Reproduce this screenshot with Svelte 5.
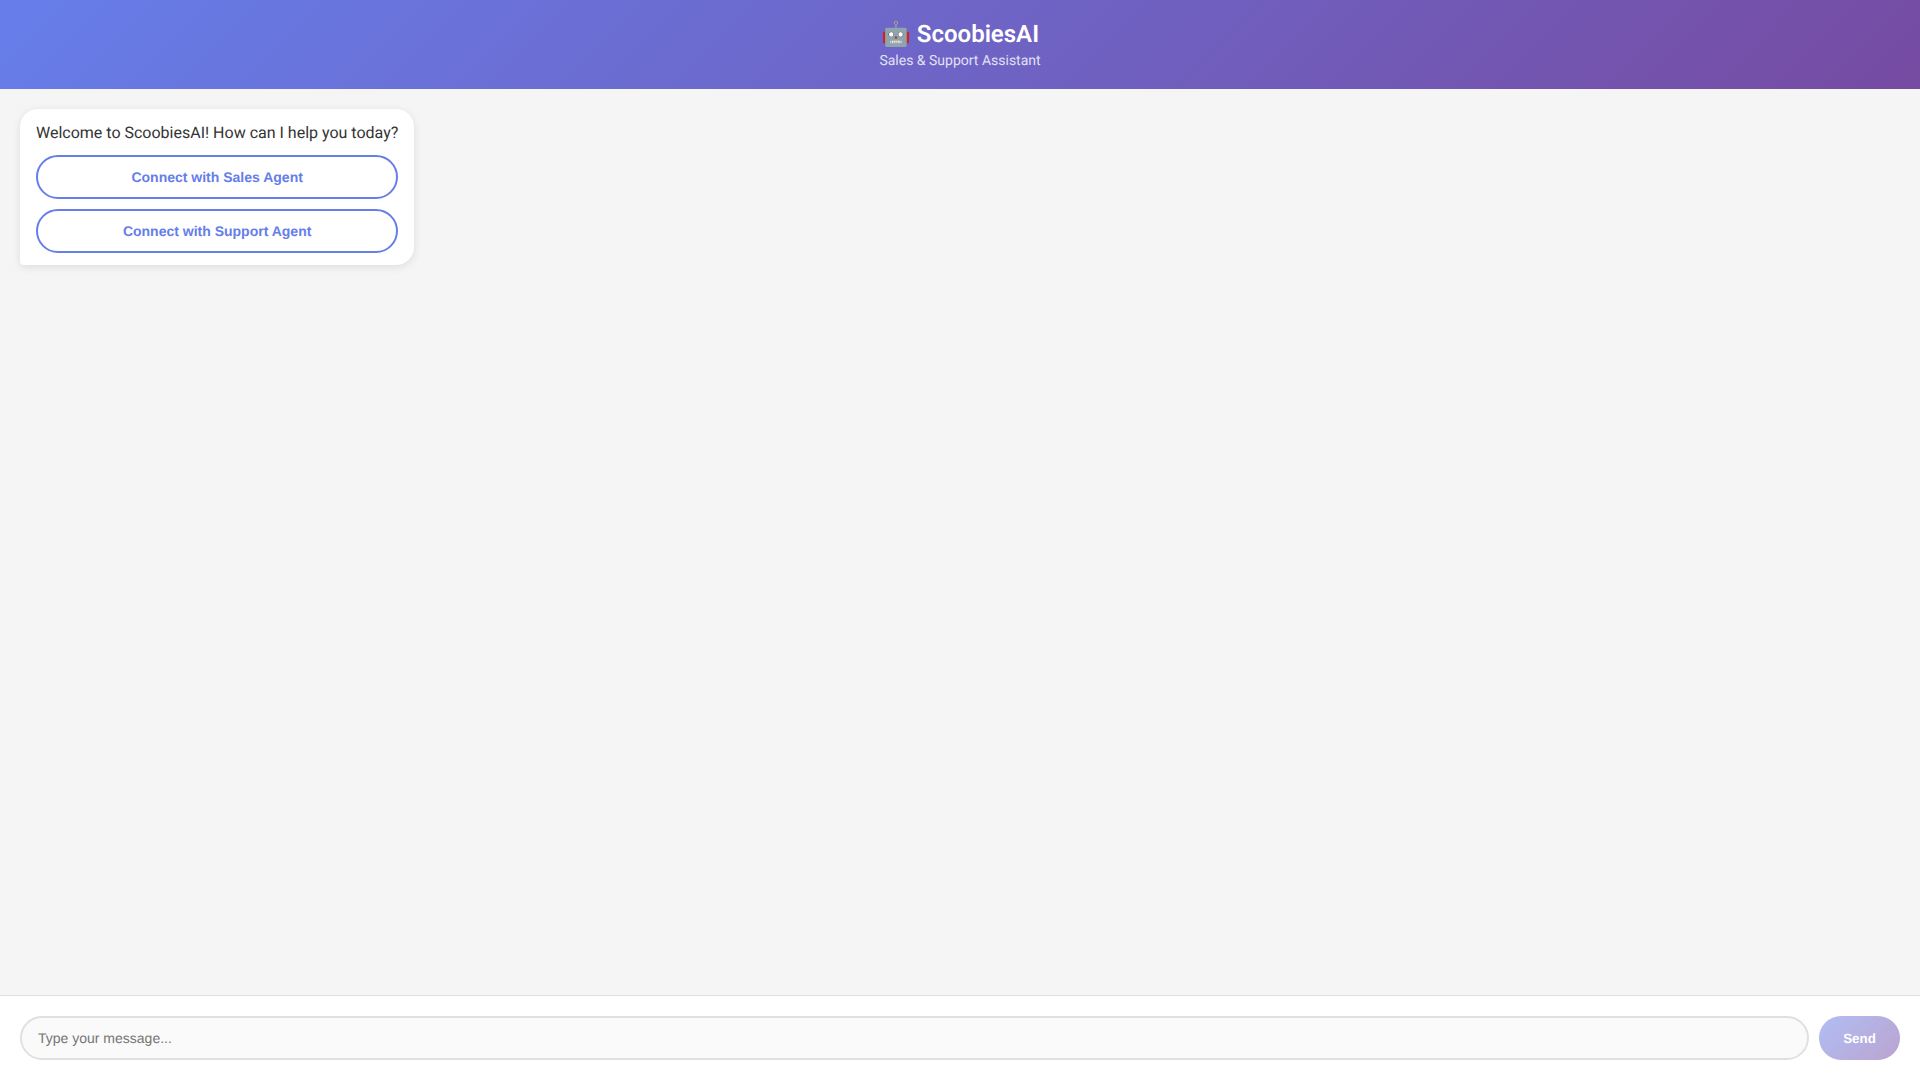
<script>
  let message = $state('');
  const actions = ['Connect with Sales Agent', 'Connect with Support Agent'];
</script>

<div class="app">
  <header class="header">
    <h1>🤖 ScoobiesAI</h1>
    <p>Sales &amp; Support Assistant</p>
  </header>
  <main class="messages">
    <div class="bubble">
      <div class="text">Welcome to ScoobiesAI! How can I help you today?</div>
      <div class="actions">
        {#each actions as a}
          <button class="action">{a}</button>
        {/each}
      </div>
    </div>
  </main>
  <footer class="composer">
    <input bind:value={message} placeholder="Type your message..." />
    <button class="send" disabled={!message}>Send</button>
  </footer>
</div>

<style>
  :global(body) {
    margin: 0;
    font-family: Roboto, sans-serif;
    text-rendering: geometricPrecision;
  }
  .app {
    height: 100vh;
    display: flex;
    flex-direction: column;
    background: #f5f5f5;
    box-sizing: border-box;
  }
  .header {
    height: 89px;
    box-sizing: border-box;
    padding-top: 20px;
    background: linear-gradient(135deg, #667eea 0%, #764ba2 100%);
    color: #fff;
    text-align: center;
    flex: none;
  }
  h1 {
    margin: 0;
    font-size: 24px;
    font-weight: 600;
    line-height: 28px;
  }
  .header p {
    margin: 5px 0 0;
    font-size: 14px;
    line-height: 16px;
    opacity: 0.8;
  }
  .messages {
    flex: 1;
    padding: 20px;
    min-height: 0;
    display: flex;
    align-items: flex-start;
  }
  .bubble {
    box-sizing: border-box;
    background: #fff;
    border-radius: 18px 18px 18px 4px;
    padding: 13px 16px 12px;
    box-shadow: 0 2px 8px rgba(0, 0, 0, 0.1);
    color: #333;
  }
  .text {
    font-size: 16px;
    line-height: 22px;
  }
  .actions {
    display: flex;
    flex-direction: column;
    gap: 10px;
    margin-top: 11px;
  }
  .action {
    height: 44px;
    box-sizing: border-box;
    background: #fff;
    border: 2px solid #667eea;
    border-radius: 22px;
    color: #667eea;
    font-family: "Liberation Sans", Arial, sans-serif;
    font-size: 14px;
    font-weight: 600;
    padding: 0 20px;
    text-rendering: geometricPrecision;
  }
  .composer {
    flex: none;
    height: 85px;
    box-sizing: border-box;
    background: #fff;
    border-top: 1px solid #e0e0e0;
    padding: 20px;
    display: flex;
    gap: 10px;
  }
  input {
    flex: 1;
    height: 44px;
    box-sizing: border-box;
    border: 2px solid #e0e0e0;
    border-radius: 22px;
    background: #fafafa;
    padding: 0 16px;
    font-family: "Liberation Sans", Arial, sans-serif;
    font-size: 14px;
    outline: none;
    text-rendering: geometricPrecision;
  }
  input::placeholder {
    color: #757575;
  }
  .send {
    width: 81px;
    height: 44px;
    border: none;
    border-radius: 22px;
    background: linear-gradient(135deg, #667eea 0%, #764ba2 100%);
    color: #fff;
    font-family: "Liberation Sans", Arial, sans-serif;
    font-size: 13.3333px;
    font-weight: 600;
    padding: 1px 0 0;
    text-rendering: geometricPrecision;
  }
  .send:disabled {
    opacity: 0.5;
  }
</style>
